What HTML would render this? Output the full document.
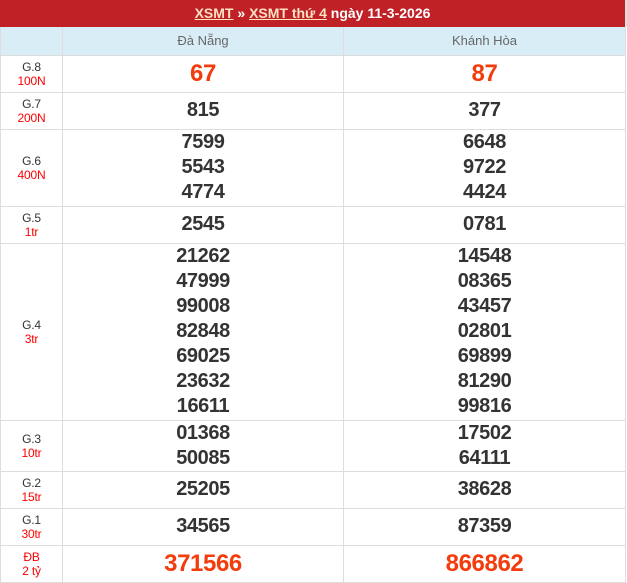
<!DOCTYPE html>
<html><head><meta charset="utf-8"><style>
*{margin:0;padding:0;box-sizing:border-box}
body{width:627px;height:575px;overflow:hidden;background:#fff;font-family:"Liberation Sans",Arial,sans-serif}
.hd{height:27px;background:#bf2127;color:#fff;font-weight:bold;font-size:14px;text-align:center;line-height:27px;border-right:2px solid #ddd}
.hd u{color:#fde2c2;text-decoration:underline}
table{border-collapse:collapse;width:626px;table-layout:fixed}
td{border:1px solid #ddd;text-align:center;vertical-align:middle;color:#333}
td.l{font-size:12px;line-height:14px;width:62px;letter-spacing:-0.2px}
td.l span{color:#f00;display:block}
tr.h td{background:#d9edf7;height:28px;font-size:13px;color:#666;border-top:none}
td.n{font-size:20px;font-weight:bold;line-height:25px;letter-spacing:-0.4px}
td.r{color:#f33c0c;font-size:24px}
</style></head><body>
<div class="hd"><u>XSMT</u> » <u>XSMT thứ 4</u> ngày 11-3-2026</div>
<table>
<tr class="h"><td style="width:62px"></td><td style="width:281px">Đà Nẵng</td><td>Khánh Hòa</td></tr>
<tr style="height:37px"><td class="l">G.8<span>100N</span></td><td class="n r">67</td><td class="n r">87</td></tr>
<tr style="height:37px"><td class="l">G.7<span>200N</span></td><td class="n">815</td><td class="n">377</td></tr>
<tr style="height:77px"><td class="l">G.6<span>400N</span></td><td class="n">7599<br>5543<br>4774</td><td class="n">6648<br>9722<br>4424</td></tr>
<tr style="height:37px"><td class="l">G.5<span>1tr</span></td><td class="n">2545</td><td class="n">0781</td></tr>
<tr style="height:177px"><td class="l">G.4<span>3tr</span></td><td class="n">21262<br>47999<br>99008<br>82848<br>69025<br>23632<br>16611</td><td class="n">14548<br>08365<br>43457<br>02801<br>69899<br>81290<br>99816</td></tr>
<tr style="height:51px"><td class="l">G.3<span>10tr</span></td><td class="n">01368<br>50085</td><td class="n">17502<br>64111</td></tr>
<tr style="height:37px"><td class="l">G.2<span>15tr</span></td><td class="n">25205</td><td class="n">38628</td></tr>
<tr style="height:37px"><td class="l">G.1<span>30tr</span></td><td class="n">34565</td><td class="n">87359</td></tr>
<tr style="height:37px"><td class="l" style="color:#f00">ĐB<span>2 tỷ</span></td><td class="n r">371566</td><td class="n r">866862</td></tr>
</table>
</body></html>
